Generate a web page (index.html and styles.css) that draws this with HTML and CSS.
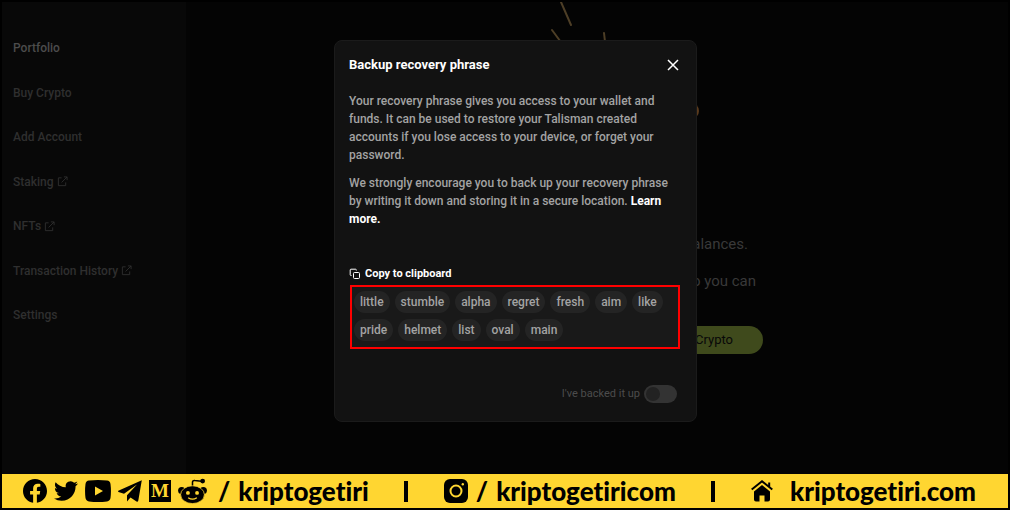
FILE: index.html
```html
<!DOCTYPE html>
<html lang="en">
<head>
<meta charset="utf-8">
<meta name="viewport" content="width=device-width, initial-scale=1">
<title>Backup recovery phrase</title>
<link rel="stylesheet" href="styles.css">
</head>
<body>
<svg class="defs" aria-hidden="true">
  <symbol id="external" viewBox="0 0 12 12"><path d="M5 2H1.500V10.500H9.500V7M7.500 1H11V4.500M11 1L5 7" fill="none" stroke="currentColor"/></symbol>
</svg>
<div class="app">
  <nav class="sidebar" aria-label="Main">
    <a class="nav-link current" href="#portfolio">Portfolio</a>
    <a class="nav-link" href="#buy">Buy Crypto</a>
    <a class="nav-link" href="#add">Add Account</a>
    <a class="nav-link" href="#staking">Staking <svg class="external"><use href="#external"/></svg></a>
    <a class="nav-link" href="#nfts">NFTs <svg class="external"><use href="#external"/></svg></a>
    <a class="nav-link" href="#history">Transaction History <svg class="external"><use href="#external"/></svg></a>
    <a class="nav-link" href="#settings">Settings</a>
  </nav>
  <main class="page">
    <div class="welcome">
      <svg class="rays" viewBox="0 0 180 130" aria-hidden="true">
        <g fill="none" stroke="#4d3e26" stroke-width="2" stroke-linecap="round"><path d="M41 0L51 23M32 28L46 47M84 31L86 48"/></g>
        <circle cx="171" cy="109" r="8" fill="#5a3a1c"/>
      </svg>
      <p class="line">balances.</p>
      <p class="line second">so you can</p>
      <button class="buy" type="button">Buy Crypto</button>
    </div>
  </main>
  <section class="modal" role="dialog" aria-labelledby="modal-title">
    <header class="modal-head">
      <h1 id="modal-title">Backup recovery phrase</h1>
      <button class="close" type="button" aria-label="Close"><svg viewBox="0 0 12 12"><path d="M1 1L11 11M11 1L1 11" fill="none" stroke="currentColor" stroke-width="1.500"/></svg></button>
    </header>
    <div class="copy-text">
      <p>Your recovery phrase gives you access to your wallet and funds. It can be used to restore your Talisman created accounts if you lose access to your device, or forget your password.</p>
      <p>We strongly encourage you to back up your recovery phrase by writing it down and storing it in a secure location. <a href="#learn">Learn more.</a></p>
    </div>
    <button class="copy" type="button"><svg viewBox="0 0 12 12"><g fill="none" stroke="currentColor"><rect x="4.500" y="4.500" width="6" height="6" rx="1"/><path d="M2.500 7.500H2a.8.800 0 0 1-.8-.8V2A.8.800 0 0 1 2 1.200h4.500a.8.800 0 0 1 .8.800v.5"/></g></svg>Copy to clipboard</button>
    <ul class="words">
      <li>little</li><li>stumble</li><li>alpha</li><li>regret</li><li>fresh</li><li>aim</li><li>like</li>
      <li>pride</li><li>helmet</li><li>list</li><li>oval</li><li>main</li>
    </ul>
    <label class="confirm">I've backed it up <input type="checkbox" role="switch"></label>
  </section>
</div>
<footer class="banner">
  <div class="social-group">
    <div class="socials">
      <svg class="facebook" viewBox="8 8 496 496"><path d="M504 256C504 119 393 8 256 8S8 119 8 256c0 123.780 90.690 226.380 209.250 245V327.690h-63V256h63v-54.640c0-62.150 37-96.480 93.670-96.480 27.140 0 55.520 4.840 55.520 4.840v61h-31.280c-30.800 0-40.410 19.120-40.410 38.730V256h68.780l-11 71.690h-57.780V501C413.310 482.380 504 379.780 504 256z"/></svg>
      <svg class="twitter" viewBox="0 0 24 24"><path d="M23.953 4.570a10 10 0 01-2.825.775 4.958 4.958 0 002.163-2.723c-.951.555-2.005.959-3.127 1.184a4.920 4.920 0 00-8.384 4.482C7.690 8.095 4.067 6.130 1.640 3.162a4.822 4.822 0 00-.666 2.475c0 1.710.870 3.213 2.188 4.096a4.904 4.904 0 01-2.228-.616v.060a4.923 4.923 0 003.946 4.827 4.996 4.996 0 01-2.212.085 4.936 4.936 0 004.604 3.417 9.867 9.867 0 01-6.102 2.105c-.390 0-.779-.023-1.170-.067a13.995 13.995 0 007.557 2.209c9.053 0 13.998-7.496 13.998-13.985 0-.210 0-.420-.015-.630A9.935 9.935 0 0024 4.590z"/></svg>
      <svg class="youtube" viewBox="0 0 26 22"><path fill-rule="evenodd" d="M4 .6Q13-.5 22 .6Q25 1 25.500 4Q26.400 11 25.500 18Q25 21 22 21.400Q13 22.500 4 21.400Q1 21 .5 18Q-.4 11 .5 4Q1 1 4 .6ZM10 6.500V15.500L18 11Z"/></svg>
      <svg class="telegram" viewBox="0 0 24 22"><path d="M23.800.2L.3 10.800Q-.3 11.500.5 12L6 13.800L19 4.500L9 15.200V21.500L12.500 17.600L18.500 21.600Q20 22 20.300 20.500Z"/></svg>
      <span class="medium">M</span>
      <svg class="reddit" viewBox="0 0 30 26"><path d="M15 9V4Q15 1.800 17.500 2.200L24 3" fill="none" stroke="#000" stroke-width="1.600"/><circle cx="25.500" cy="2.700" r="2.500"/><circle cx="3.800" cy="12.500" r="3.700"/><circle cx="26.200" cy="12.500" r="3.700"/><ellipse cx="15" cy="16.800" rx="12.300" ry="9.200" stroke="#ffd631" stroke-width=".8"/><circle cx="10.300" cy="15" r="2" fill="#ffd631"/><circle cx="19.700" cy="15" r="2" fill="#ffd631"/><path d="M10.500 20Q15 23 19.500 20" fill="none" stroke="#ffd631" stroke-width="1.300"/></svg>
    </div>
    <a class="handle" href="#kriptogetiri"><span>/</span>kriptogetiri</a>
  </div>
  <span class="divider"></span>
  <a class="handle instagram" href="#kriptogetiricom"><svg viewBox="0 0 24 24"><rect width="24" height="24" rx="6"/><circle cx="12" cy="12" r="5.500" fill="none" stroke="#ffd631" stroke-width="2"/><circle cx="18.800" cy="5.200" r="1.200" fill="#ffd631"/></svg><span>/</span>kriptogetiricom</a>
  <span class="divider"></span>
  <a class="handle site" href="#site"><svg viewBox="0 0 22 22"><path d="M11 5L19 11.500V19.500Q19 21.500 17 21.500H13.500V15.500H8.500V21.500H5Q3 21.500 3 19.500V11.500Z"/><path d="M.7 9.500L11 1.300L21.300 9.500M18.200 7V2.500" fill="none" stroke="#000" stroke-width="2"/></svg>kriptogetiri.com</a>
</footer>
</body>
</html>
```
FILE: styles.css
```css
* { box-sizing: border-box; }
body {
  margin: 0;
  min-height: 100vh;
  display: flex;
  flex-direction: column;
  border: 2px solid #000;
  background: #040404;
  color: #a3a3a3;
  font: 500 12px/18px Roboto, "Liberation Sans", sans-serif;
}
button { border: 0; padding: 0; background: none; font: inherit; cursor: pointer; }
a { color: inherit; text-decoration: none; }
h1, p, ul { margin: 0; padding: 0; }
.defs { position: absolute; width: 0; height: 0; }
.app { position: relative; flex: 1; display: flex; }
.sidebar {
  width: 184px;
  flex: none;
  display: flex;
  flex-direction: column;
  justify-content: space-between;
  padding: 37px 11px 150px;
  background: #080808;
  color: #2f2f2f;
}
.nav-link { display: flex; align-items: center; gap: 3px; }
.current { color: #4c4c4c; }
.external { width: 11px; height: 11px; }
.page { flex: 1; display: flex; }
.welcome {
  display: flex;
  flex-direction: column;
  align-items: flex-end;
  margin-left: 334px;
  color: #393939;
}
.rays { width: 180px; height: 130px; margin-right: 63px; }
.line { font-size: 15px; font-weight: 400; line-height: 20px; margin: 102px 15px 0 0; }
.second { margin: 17px 7px 0 0; }
.buy {
  margin-top: 35px;
  padding: 4px 30px;
  border-radius: 14px;
  background: #3f4a1c;
  color: #080808;
  font-size: 13px;
  font-weight: 400;
  line-height: 20px;
}
.modal {
  position: absolute;
  top: 38px;
  left: calc(50% - 171px);
  width: 363px;
  padding: 15px 16px 18px 14px;
  border: 1px solid #1b1b1b;
  border-radius: 8px;
  background: #121212;
}
.modal-head { display: flex; justify-content: space-between; align-items: center; color: #fff; }
h1 { font-size: 13px; line-height: 18px; font-weight: 700; }
.close { display: flex; padding: 0 1px; color: #fff; }
.close svg { width: 12px; height: 12px; }
.copy-text { display: grid; gap: 10px; margin: 18px 10px 0 0; line-height: 18px; }
.copy-text a { color: #fff; font-weight: 700; }
.copy { display: flex; align-items: center; gap: 4px; margin-top: 37px; color: #fff; font-size: 11px; font-weight: 700; }
.copy svg { width: 12px; height: 12px; }
.words {
  display: flex;
  flex-wrap: wrap;
  gap: 6px 5px;
  margin: 2px 0 0 1px;
  padding: 4px 10px 6px 2px;
  border: 2px solid #f00;
  background: #191919;
  list-style: none;
}
.words li { padding: 2px 6px; border-radius: 11px; background: #242424; }
.confirm { display: flex; justify-content: flex-end; align-items: center; gap: 4px; margin-top: 36px; padding-right: 3px; color: #4c4c4c; font-size: 11px; font-weight: 400; }
.confirm input {
  appearance: none;
  display: flex;
  width: 33px;
  height: 18px;
  margin: 0;
  padding: 2px;
  border-radius: 9px;
  background: #333;
}
.confirm input::before { content: ""; width: 14px; height: 14px; border-radius: 50%; background: #222; }
.confirm input:checked { justify-content: flex-end; }
.banner {
  display: flex;
  align-items: center;
  justify-content: space-between;
  height: 34px;
  padding: 0 32px 0 21px;
  background: #ffd631;
  color: #000;
  font: 900 26px/32px Lato, sans-serif;
  font-variant-ligatures: none;
}
.social-group { display: flex; align-items: center; gap: 11px; }
.socials { display: flex; align-items: center; gap: 7px; }
.facebook, .twitter { width: 24px; height: 24px; }
.youtube { width: 26px; height: 22px; }
.telegram { width: 24px; height: 22px; }
.medium { width: 22px; height: 22px; background: #000; color: #ffd631; font: 700 19px/22px "Liberation Serif", serif; text-align: center; }
.reddit { width: 29px; height: 26px; }
.handle { display: flex; align-items: center; gap: 8px; }
.instagram svg { width: 24px; height: 24px; }
.site { gap: 17px; }
.site svg { width: 22px; height: 22px; }
.divider { width: 4px; height: 21px; background: #000; }
```
